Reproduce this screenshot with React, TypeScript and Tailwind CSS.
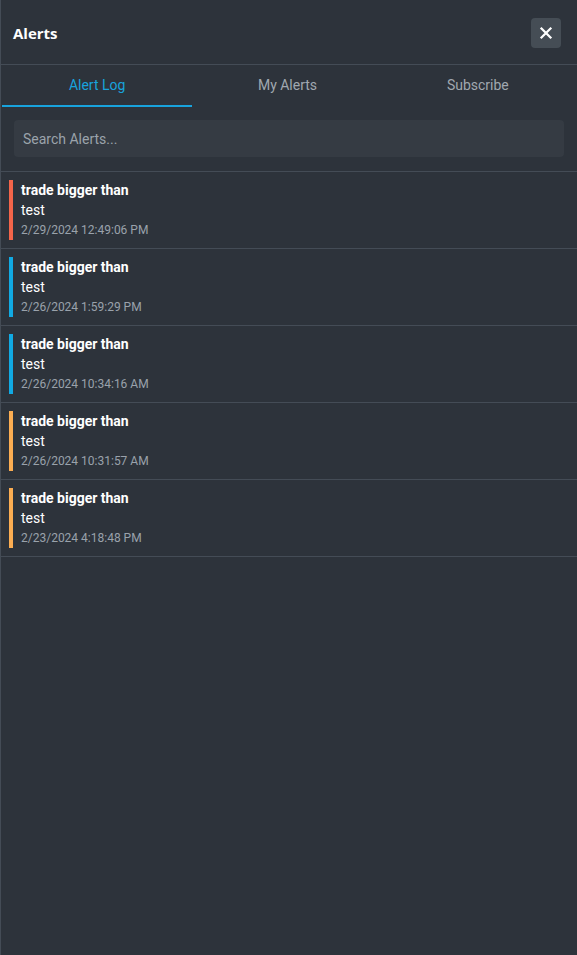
import { useState } from "react"

interface Alert {
  title: string
  body: string
  time: string
  color: string
}

const alerts: Alert[] = [
  { title: "trade bigger than", body: "test", time: "2/29/2024 12:49:06 PM", color: "bg-[#f4654a]" },
  { title: "trade bigger than", body: "test", time: "2/26/2024 1:59:29 PM", color: "bg-[#11aae3]" },
  { title: "trade bigger than", body: "test", time: "2/26/2024 10:34:16 AM", color: "bg-[#11aae3]" },
  { title: "trade bigger than", body: "test", time: "2/26/2024 10:31:57 AM", color: "bg-[#fbad52]" },
  { title: "trade bigger than", body: "test", time: "2/23/2024 4:18:48 PM", color: "bg-[#fbad52]" },
]

const tabs = ["Alert Log", "My Alerts", "Subscribe"]

export default function App() {
  const [activeTab, setActiveTab] = useState(0)

  return (
    <div className="h-[955px] w-[577px] bg-[#2d333b] border-l border-[#444c56] font-['Roboto',sans-serif] flex flex-col">
      {/* Header */}
      <div className="h-[65px] flex items-center justify-between pl-3 pr-4 border-b border-[#444c56]">
        <h1 className="text-[15px] font-bold text-white font-['Open_Sans',sans-serif] mt-[2px]">Alerts</h1>
        <button className="h-[30px] w-[30px] rounded bg-[#454d55] flex items-center justify-center mt-[1px]">
          <svg viewBox="0 0 24 24" className="h-[18px] w-[18px]" fill="none" stroke="white" strokeWidth={3} strokeLinecap="square">
            <path d="M6 6l12 12M18 6L6 18" />
          </svg>
        </button>
      </div>

      {/* Tabs */}
      <div className="grid grid-cols-3 h-[42px] pl-px pr-[4px]">
        {tabs.map((t, i) => (
          <button
            key={t}
            onClick={() => setActiveTab(i)}
            className={
              i === activeTab
                ? "text-sm text-[#18a3dd] border-b-2 border-[#18a3dd]"
                : "text-sm text-[#a0a8b0] border-b-2 border-transparent"
            }
          >
            {t}
          </button>
        ))}
      </div>

      {/* Search */}
      <div className="px-[13px] pt-[13px] pb-[14px] border-b border-[#444c56]">
        <input
          type="text"
          placeholder="Search Alerts..."
          className="w-full h-[37px] rounded-sm bg-[#353b43] px-[9px] text-sm text-white placeholder:text-[#9ba3ab] outline-none"
        />
      </div>

      {/* Alert list */}
      {alerts.map((a, i) => (
        <div key={i} className="flex gap-2 pl-2 py-2 border-b border-[#444c56]">
          <div className={`w-[4px] h-[60px] ${a.color}`}></div>
          <div className="flex flex-col">
            <div className="text-sm font-bold text-white leading-[20px]">{a.title}</div>
            <div className="text-sm text-white leading-[20px]">{a.body}</div>
            <div className="text-xs text-[#9aa2ab] leading-[18px] mt-[1px]">{a.time}</div>
          </div>
        </div>
      ))}
    </div>
  )
}
